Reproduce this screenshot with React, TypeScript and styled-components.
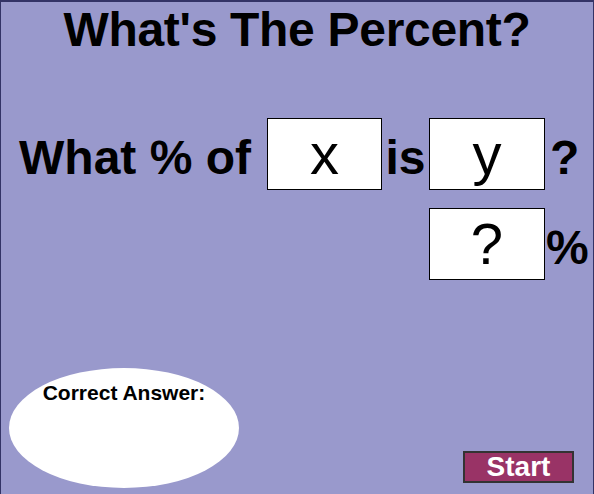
import React from 'react';
import styled, { createGlobalStyle } from 'styled-components';

const GlobalStyle = createGlobalStyle`
  html, body {
    margin: 0;
    padding: 0;
    overflow: hidden;
  }
  body {
    font-family: 'Liberation Sans', Arial, sans-serif;
  }
`;

const Stage = styled.div`
  box-sizing: border-box;
  width: 594px;
  height: 494px;
  background-color: #9999cc;
  border-top: 2px solid #333366;
  border-left: 1px solid #333366;
  border-right: 1px solid #333366;
  color: #000000;
  display: flex;
  flex-direction: column;
`;

const Title = styled.h1`
  margin: 0;
  font-size: 48px;
  font-weight: bold;
  line-height: 56px;
  letter-spacing: -0.3px;
  text-align: center;
`;

const Question = styled.div`
  display: grid;
  grid-template-columns: 248px 115px 47px 116px 1fr;
  grid-template-rows: 72px 72px;
  row-gap: 18px;
  align-items: baseline;
  margin-top: 60px;
  padding-left: 18px;
`;

const Word = styled.span<{ col: number; row?: number; pad?: number; center?: boolean }>`
  grid-column: ${p => p.col};
  grid-row: ${p => p.row || 1};
  font-size: 48px;
  font-weight: bold;
  padding-left: ${p => p.pad || 0}px;
  text-align: ${p => (p.center ? 'center' : 'left')};
`;

const Slot = styled.div<{ col: number; row?: number }>`
  grid-column: ${p => p.col};
  grid-row: ${p => p.row || 1};
  box-sizing: border-box;
  height: 72px;
  background: #ffffff;
  border: 1px solid #000000;
  font-size: 58px;
  line-height: 70px;
  text-align: center;
`;

const Footer = styled.div`
  display: flex;
  justify-content: space-between;
  align-items: flex-end;
  margin-top: 88px;
  padding: 0 19px 0 8px;
`;

const AnswerBubble = styled.div`
  box-sizing: border-box;
  width: 230px;
  height: 120px;
  border-radius: 50%;
  background: #ffffff;
  padding-top: 13px;
  text-align: center;
`;

const AnswerLabel = styled.div`
  font-size: 21px;
  font-weight: bold;
  line-height: 24px;
`;

const StartButton = styled.button`
  box-sizing: border-box;
  width: 111px;
  height: 32px;
  margin: 0 0 5px 0;
  padding: 0;
  background: #993366;
  border: 2px solid #333333;
  color: #ffffff;
  font-family: 'Liberation Sans', Arial, sans-serif;
  font-size: 28px;
  font-weight: bold;
  line-height: 1;
  display: flex;
  align-items: center;
  justify-content: center;
  cursor: pointer;
`;

export default function App() {
  return (
    <>
      <GlobalStyle />
      <Stage>
        <Title>What's The Percent?</Title>
        <Question>
          <Word col={1}>What % of</Word>
          <Slot col={2}>x</Slot>
          <Word col={3} center>is</Word>
          <Slot col={4}>y</Slot>
          <Word col={5} pad={5}>?</Word>
          <Slot col={4} row={2}>?</Slot>
          <Word col={5} row={2} pad={1}>%</Word>
        </Question>
        <Footer>
          <AnswerBubble>
            <AnswerLabel>Correct Answer:</AnswerLabel>
          </AnswerBubble>
          <StartButton>Start</StartButton>
        </Footer>
      </Stage>
    </>
  );
}
